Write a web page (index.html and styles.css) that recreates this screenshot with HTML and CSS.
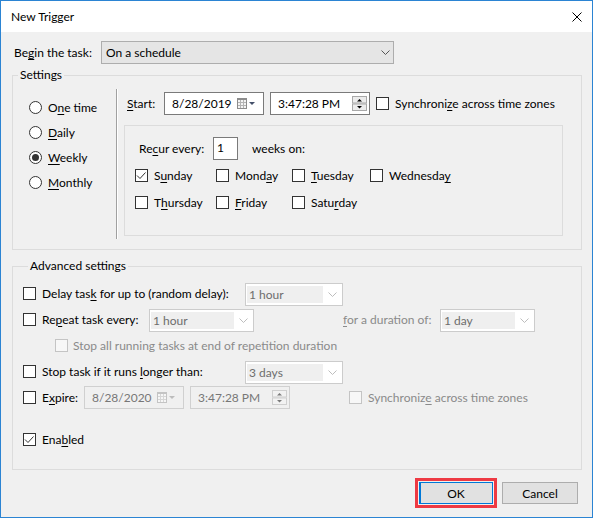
FILE: index.html
```html
<!DOCTYPE html>
<html>
<head>
<meta charset="utf-8">
<link rel="stylesheet" href="styles.css">
</head>
<body>
<div class="window">
  <div class="titlebar">
    <span class="title">New Trigger</span>
    <svg class="close" width="10" height="10" viewBox="0 0 10 10"><path d="M0.5 0.5L9.5 9.5M9.5 0.5L0.5 9.5" stroke="#000" stroke-width="1" fill="none"/></svg>
  </div>
  <div class="content">
    <div class="begin-row">
      <span class="begin-label">Be<u>g</u>in the task:</span>
      <div class="combo combo-main">
        <span>On a schedule</span>
        <svg width="9" height="5" viewBox="0 0 9 5"><path d="M0.5 0.5L4.5 4.5L8.5 0.5" stroke="#555" fill="none"/></svg>
      </div>
    </div>

    <fieldset class="group settings">
      <legend>Settings</legend>
      <div class="settings-body">
        <div class="freq">
          <div class="radio-row"><span class="radio"></span><span>O<u>n</u>e time</span></div>
          <div class="radio-row"><span class="radio"></span><span><u>D</u>aily</span></div>
          <div class="radio-row"><span class="radio on"></span><span><u>W</u>eekly</span></div>
          <div class="radio-row"><span class="radio"></span><span><u>M</u>onthly</span></div>
        </div>
        <div class="sep"></div>
        <div class="sched">
          <div class="start-row">
            <span class="start-label"><u>S</u>tart:</span>
            <div class="field field-date">
              <span>8/28/2019</span>
              <svg class="cal" width="20" height="11" viewBox="0 0 20 11">
                <rect x="0.5" y="0.5" width="9" height="10" fill="#f4f4f4" stroke="#8c8c8c"/>
                <rect x="0" y="0" width="10" height="2" fill="#8c8c8c"/>
                <path d="M3.5 2V10M6.5 2V10M1 4.5H9M1 7.5H9" stroke="#b4b4b4" fill="none"/>
                <path d="M12 4H18L15 7Z" fill="#44506a"/>
              </svg>
            </div>
            <div class="field field-time">
              <span>3:47:28 PM</span>
              <svg class="spin" width="15" height="15" viewBox="0 0 15 15">
                <rect x="0.5" y="0.5" width="14" height="6.5" fill="#ececec" stroke="#a8a8a8"/>
                <rect x="0.5" y="8" width="14" height="6.5" fill="#ececec" stroke="#a8a8a8"/>
                <path d="M5 5.5L7.5 3L10 5.5Z" fill="#000"/>
                <path d="M5 10L7.5 12.5L10 10Z" fill="#000"/>
              </svg>
            </div>
            <span class="cb cb-sync"></span>
            <span class="cb-label">Synchroni<u>z</u>e across time zones</span>
          </div>
          <div class="recur-box">
            <div class="recur-row">
              <span class="recur-label">Re<u>c</u>ur every:</span>
              <div class="num-input"><span>1</span></div>
              <span class="weeks">weeks on:</span>
            </div>
            <div class="days">
              <div class="day"><span class="cb checked"><svg width="11" height="11" viewBox="0 0 11 11"><path d="M1 5.5L4 8.5L9.5 2.5" stroke="#333" fill="none"/></svg></span><span>S<u>u</u>nday</span></div>
              <div class="day"><span class="cb"></span><span>Mond<u>a</u>y</span></div>
              <div class="day"><span class="cb"></span><span><u>T</u>uesday</span></div>
              <div class="day"><span class="cb"></span><span>Wednesda<u>y</u></span></div>
              <div class="day"><span class="cb"></span><span>T<u>h</u>ursday</span></div>
              <div class="day"><span class="cb"></span><span><u>F</u>riday</span></div>
              <div class="day"><span class="cb"></span><span>Satu<u>r</u>day</span></div>
            </div>
          </div>
        </div>
      </div>
    </fieldset>

    <fieldset class="group advanced">
      <legend>Advanced settings</legend>
      <div class="adv-row">
        <span class="cb"></span>
        <span class="adv-label w-long">Delay tas<u>k</u> for up to (random delay):</span>
        <div class="combo combo-dis w-98">
          <span class="combo-fill">1 hour</span>
          <span class="chev"><svg width="9" height="5" viewBox="0 0 9 5"><path d="M0.5 0.5L4.5 4.5L8.5 0.5" stroke="#bdbdbd" fill="none"/></svg></span>
        </div>
      </div>
      <div class="adv-row">
        <span class="cb"></span>
        <span class="adv-label w-repeat">Re<u>p</u>eat task every:</span>
        <div class="combo combo-dis w-105">
          <span class="combo-fill">1 hour</span>
          <span class="chev"><svg width="9" height="5" viewBox="0 0 9 5"><path d="M0.5 0.5L4.5 4.5L8.5 0.5" stroke="#bdbdbd" fill="none"/></svg></span>
        </div>
        <span class="dis-text dur-label"><u>f</u>or a duration of:</span>
        <div class="combo combo-dis w-95">
          <span class="combo-fill">1 day</span>
          <span class="chev"><svg width="9" height="5" viewBox="0 0 9 5"><path d="M0.5 0.5L4.5 4.5L8.5 0.5" stroke="#bdbdbd" fill="none"/></svg></span>
        </div>
      </div>
      <div class="adv-row indent">
        <span class="cb dis"></span>
        <span class="dis-text stop-all">Stop all running tasks at end of repetition durat<u>i</u>on</span>
      </div>
      <div class="adv-row">
        <span class="cb"></span>
        <span class="adv-label w-long">Stop task if it runs <u>l</u>onger than:</span>
        <div class="combo combo-dis w-98">
          <span class="combo-fill">3 days</span>
          <span class="chev"><svg width="9" height="5" viewBox="0 0 9 5"><path d="M0.5 0.5L4.5 4.5L8.5 0.5" stroke="#bdbdbd" fill="none"/></svg></span>
        </div>
      </div>
      <div class="adv-row">
        <span class="cb"></span>
        <span class="adv-label w-expire">E<u>x</u>pire:</span>
        <div class="field field-dis">
          <span>8/28/2020</span>
          <svg class="cal" width="20" height="11" viewBox="0 0 20 11">
            <rect x="0.5" y="0.5" width="9" height="10" fill="#f6f6f6" stroke="#c4c4c4"/>
            <rect x="0" y="0" width="10" height="2" fill="#c4c4c4"/>
            <path d="M3.5 2V10M6.5 2V10M1 4.5H9M1 7.5H9" stroke="#d6d6d6" fill="none"/>
            <path d="M12 4H18L15 7Z" fill="#bcbcbc"/>
          </svg>
        </div>
        <div class="field field-dis field-time">
          <span>3:47:28 PM</span>
          <svg class="spin" width="15" height="15" viewBox="0 0 15 15">
            <rect x="0.5" y="0.5" width="14" height="6.5" fill="#f2f2f2" stroke="#cfcfcf"/>
            <rect x="0.5" y="8" width="14" height="6.5" fill="#f2f2f2" stroke="#cfcfcf"/>
            <path d="M5 5.5L7.5 3L10 5.5Z" fill="#7a7a7a"/>
            <path d="M5 10L7.5 12.5L10 10Z" fill="#7a7a7a"/>
          </svg>
        </div>
        <span class="cb dis exp-sync"></span>
        <span class="dis-text cb-label">Synchroniz<u>e</u> across time zones</span>
      </div>
      <div class="adv-row enabled-row">
        <span class="cb checked"><svg width="11" height="11" viewBox="0 0 11 11"><path d="M1 5.5L4 8.5L9.5 2.5" stroke="#333" fill="none"/></svg></span>
        <span class="adv-label">Ena<u>b</u>led</span>
      </div>
    </fieldset>

    <div class="buttons">
      <div class="highlight"><div class="btn btn-default">OK</div></div>
      <div class="btn">Cancel</div>
    </div>
  </div>
</div>
</body>
</html>
```

FILE: styles.css
```css
html, body {
  margin: 0;
  padding: 0;
  background: #f0f0f0;
}
body {
  font-family: Lato, "Liberation Sans", sans-serif;
  font-size: 12px;
  color: #000;
}
u {
  text-decoration: underline;
  text-decoration-thickness: 1px;
  text-underline-offset: 2px;
}
.window {
  width: 593px;
  height: 518px;
  box-sizing: border-box;
  border: 1px solid #2b84d3;
  background: #f0f0f0;
  display: flex;
  flex-direction: column;
}
.titlebar {
  height: 31px;
  flex: none;
  background: #fff;
  display: flex;
  align-items: center;
  justify-content: space-between;
  padding-left: 10px;
}
.close {
  margin-right: 10px;
  display: block;
}
.content {
  flex: 1;
  padding-left: 11px;
  display: flex;
  flex-direction: column;
}
.begin-row {
  margin-top: 9px;
  height: 23px;
  display: flex;
  align-items: center;
}
.begin-label {
  margin-left: 2px;
  width: 87px;
}
.combo {
  box-sizing: border-box;
  height: 23px;
  display: flex;
  align-items: center;
  justify-content: space-between;
}
.combo svg { display: block; }
.combo-main {
  width: 293px;
  border: 1px solid #adadad;
  background: #e5e5e5;
  padding: 0 3px 0 4px;
}

.group {
  margin: 0;
  padding: 0;
  border: 1px solid #dcdcdc;
  width: 570px;
  box-sizing: border-box;
  min-width: 0;
}
.group legend {
  margin-left: 5px;
  padding: 0 2px;
  line-height: 16px;
}
.settings {
  margin-top: 3px;
}
.settings-body {
  height: 166px;
  display: flex;
}
.freq {
  width: 103px;
  box-sizing: border-box;
  padding-top: 12px;
  padding-left: 16px;
  display: flex;
  flex-direction: column;
}
.radio-row {
  height: 25px;
  display: flex;
  align-items: center;
  gap: 6px;
}
.radio {
  width: 13px;
  height: 13px;
  box-sizing: border-box;
  border: 1px solid #333;
  border-radius: 50%;
  background: #fff;
  display: flex;
  align-items: center;
  justify-content: center;
}
.radio.on::after {
  content: "";
  width: 7px;
  height: 7px;
  border-radius: 50%;
  background: #333;
}
.sep {
  margin-top: 6px;
  height: 150px;
  border-left: 1px solid #a0a0a0;
  border-right: 1px solid #fff;
}
.sched {
  flex: 1;
  display: flex;
  flex-direction: column;
}
.start-row {
  margin-top: 9px;
  padding-left: 9px;
  height: 23px;
  display: flex;
  align-items: center;
}
.start-label { width: 37px; }
.field {
  box-sizing: border-box;
  width: 100px;
  height: 23px;
  border: 1px solid #7a7a7a;
  background: #fff;
  display: flex;
  align-items: center;
  justify-content: space-between;
  padding-left: 7px;
}
.field svg { display: block; }
.field .cal { margin-right: 6px; }
.field .spin { margin-right: 2px; }
.field-time { margin-left: 6px; }
.cb {
  width: 13px;
  height: 13px;
  flex: none;
  box-sizing: border-box;
  border: 1px solid #333;
  background: #fff;
  display: flex;
  align-items: center;
  justify-content: center;
}
.cb.dis {
  border-color: #c4c4c4;
  background: #f7f7f7;
}
.cb svg { display: block; }
.cb-sync { margin-left: 6px; }
.cb-label { margin-left: 6px; }

.recur-box {
  margin-top: 10px;
  margin-left: 6px;
  width: 439px;
  height: 111px;
  box-sizing: border-box;
  border: 1px solid #dcdcdc;
}
.recur-row {
  margin-top: 11px;
  padding-left: 14px;
  height: 23px;
  display: flex;
  align-items: center;
}
.recur-label { width: 74px; }
.num-input {
  box-sizing: border-box;
  width: 25px;
  height: 23px;
  border: 1px solid #7a7a7a;
  background: #fff;
  padding-left: 3px;
  line-height: 19px;
}
.weeks { margin-left: 14px; }
.days {
  margin-top: 2px;
  padding-left: 10px;
  display: grid;
  grid-template-columns: 81px 76px 78px auto;
  grid-auto-rows: 27px;
}
.day {
  display: flex;
  align-items: center;
  gap: 6px;
}

.advanced {
  margin-top: 8px;
  padding: 6px 0 17px 10px;
}
.adv-row {
  height: 26px;
  display: flex;
  align-items: center;
}
.adv-label { margin-left: 6px; }
.w-long { width: 203px; }
.w-repeat { width: 107px; }
.w-expire { width: 42px; }
.combo-dis {
  border: 1px solid #cccccc;
  background: #fff;
  padding: 2px 0 2px 1px;
  margin-top: 2px;
  color: #6d6d6d;
}
.combo-fill {
  flex: 1;
  align-self: stretch;
  background: #efefef;
  padding-left: 2px;
  display: flex;
  align-items: center;
}
.chev {
  width: 19px;
  display: flex;
  justify-content: center;
}
.w-98 { width: 98px; }
.w-105 { width: 105px; }
.w-95 { width: 95px; }
.dis-text { color: #8a8a8a; }
.dur-label {
  margin-left: 89px;
  width: 97px;
}
.indent { padding-left: 32px; }
.stop-all { margin-left: 5px; }
.field-dis {
  border-color: #d0d0d0;
  background: #f0f0f0;
  color: #777;
}
.exp-sync { margin-left: 59px; }
.enabled-row { margin-top: 16px; }

.buttons {
  margin-top: 8px;
  padding-right: 14px;
  display: flex;
  justify-content: flex-end;
  align-items: center;
  gap: 5px;
}
.highlight {
  border: 3px solid #ee3a43;
  padding: 1px;
}
.btn {
  box-sizing: border-box;
  width: 76px;
  height: 22px;
  border: 1px solid #adadad;
  background: #e1e1e1;
  display: flex;
  align-items: center;
  justify-content: center;
}
.btn-default {
  width: 74px;
  border-color: #0078d7;
  box-shadow: inset 1px 0 0 #0078d7;
}
```
